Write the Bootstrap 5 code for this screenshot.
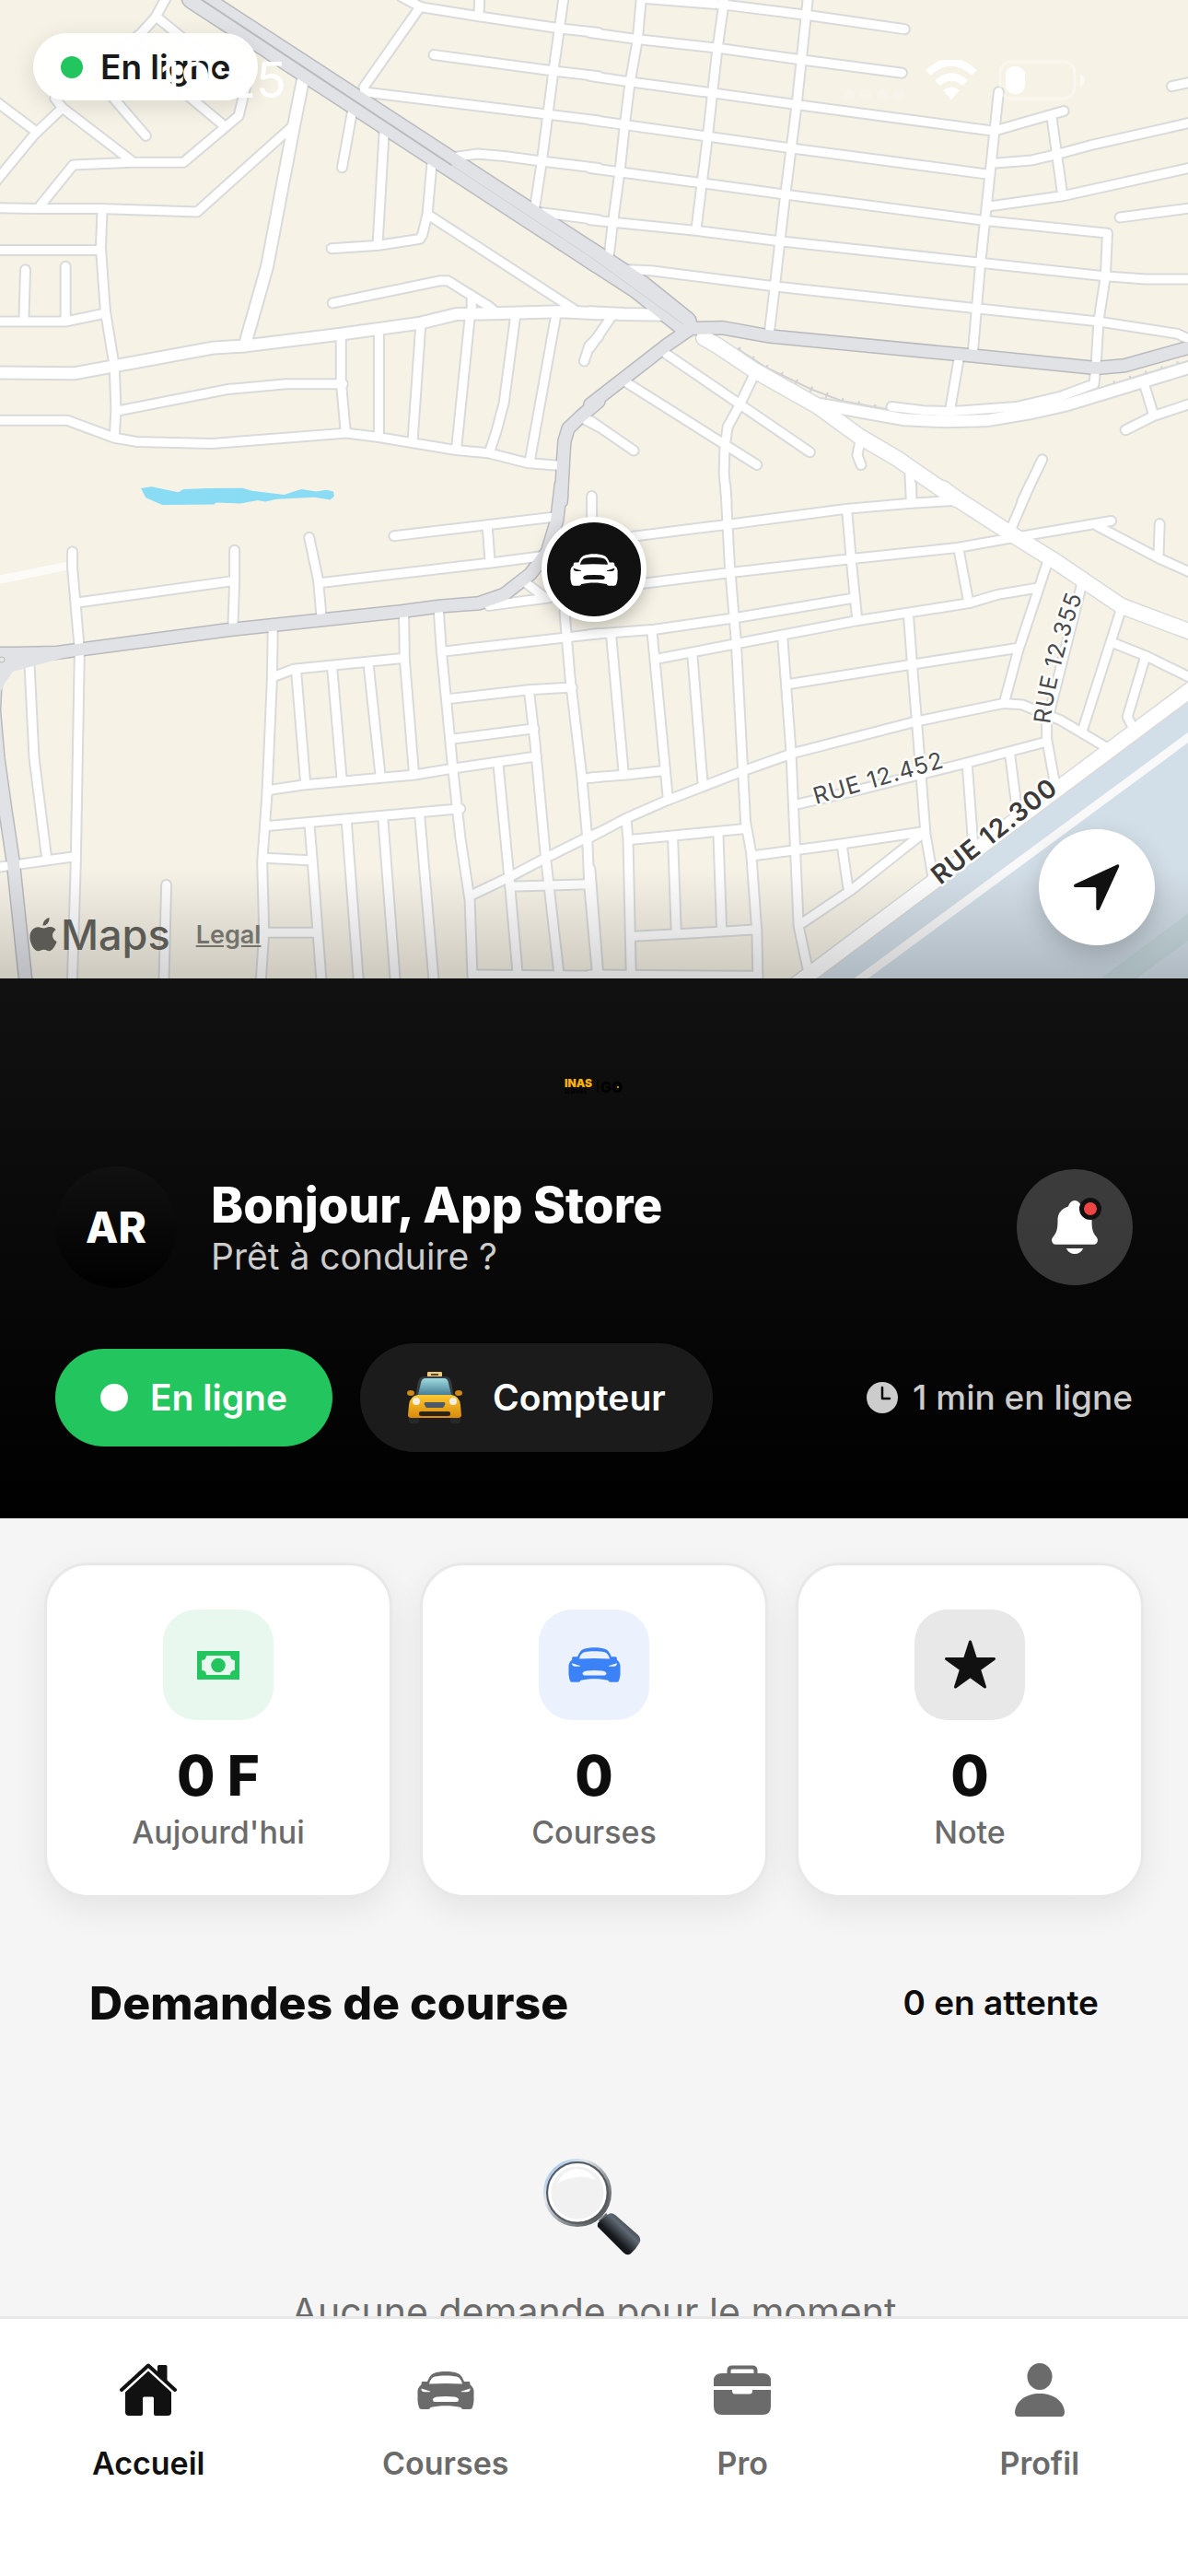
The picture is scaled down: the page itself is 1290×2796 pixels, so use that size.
<!DOCTYPE html>
<html lang="fr">
<head>
<meta charset="utf-8">
<meta name="viewport" content="width=device-width, initial-scale=1">
<title>INAS Go – Accueil</title>
<link href="https://cdn.jsdelivr.net/npm/bootstrap@5.3.0/dist/css/bootstrap.min.css" rel="stylesheet">
<style>
  body { font-family: Inter, "Liberation Sans", sans-serif; background: #f5f5f5; color: #0d0d0d; }
  button, a { font-family: inherit; }
  svg { display: block; flex: none; }

  /* Map */
  .map-area { background: #f6f2e6; }
  .map-canvas { width: 100%; height: auto; }
  .map-canvas path { fill: none; vector-effect: non-scaling-stroke; stroke-linecap: round; stroke-linejoin: round; }
  .map-canvas .shape { stroke: none; }
  .casing { stroke: #d9dbda; stroke-width: 13px; }
  .casing-lg { stroke: #d9dbda; stroke-width: 16px; }
  .casing-xl { stroke: #d9dbda; stroke-width: 19px; }
  .street { stroke: #fff; stroke-width: 9px; }
  .street-lg { stroke: #fff; stroke-width: 12px; }
  .street-xl { stroke: #fff; stroke-width: 16px; }
  .main-edge { stroke: #b9babe; stroke-width: 16px; }
  .main-road { stroke: #e1e2e6; stroke-width: 13px; }
  .way-edge { stroke: #b9babe; stroke-width: 29px; }
  .way-road { stroke: #e1e2e6; stroke-width: 26px; }
  .map-label { font-size: 25px; fill: #4a4a4a; stroke: #fff; stroke-width: 5px; paint-order: stroke; stroke-linejoin: round; letter-spacing: 1px; }
  .map-label-strong { font-size: 28px; font-weight: 600; fill: #3c3a38; }
  .map-fade { height: 120px; background: linear-gradient(rgba(0,0,0,0), rgba(0,0,0,.17)); }
  .map-pill { padding: 14px 30px; gap: 19px; background: rgba(255,255,255,.95); font-size: 37px; line-height: 45px; font-weight: 600; color: #1a1a1a; box-shadow: 0 6px 24px rgba(0,0,0,.12); margin: 36px; }
  .dot-live { width: 24px; height: 24px; background: #22c55e; }
  .status-bar { padding: 55px 112px 0 174px; color: #fff; }
  .clock-text { font-size: 54px; line-height: 64px; }
  .car-pin { width: 114px; height: 114px; background: #111; border: 6px solid #fff; left: 50%; top: 58.200%; box-shadow: 0 6px 18px rgba(0,0,0,.25); }
  .map-credit { padding: 0 32px 20px; color: #5b5a55; gap: 4px; }
  .maps-word { font-size: 45px; line-height: 54px; font-weight: 500; }
  .legal-link { font-size: 27px; line-height: 40px; font-weight: 600; color: #73726c; margin-left: 24px; }
  .locate-btn { width: 126px; height: 126px; background: #fff; margin: 36px; box-shadow: 0 9px 27px rgba(0,0,0,.18); }

  /* Driver header */
  .driver-head { background: linear-gradient(#111, #000); padding: 106px 60px 72px; }
  .brand-row { margin-bottom: 76px; }
  .avatar { width: 132px; height: 132px; background: linear-gradient(#111, #000); font-size: 46px; font-weight: 800; }
  .greet { padding-left: 37px; }
  .hello { font-size: 53px; line-height: 60px; font-weight: 800; }
  .hello-sub { font-size: 39px; line-height: 46px; color: #ccc; margin: 3px 0 0; }
  .bell-btn { width: 126px; height: 126px; background: rgba(255,255,255,.2); }
  .bell-dot { width: 24px; height: 24px; background: #ef4444; border: 5px solid #111; top: 30px; right: 33px; }
  .action-row { margin-top: 60px; gap: 30px; }
  .pill-btn { font-size: 39px; line-height: 46px; font-weight: 600; color: #fff; border: 0; }
  .pill-online { background: #22c55e; padding: 30px 49px; gap: 24px; }
  .pill-meter { background: #1b1b1b; padding: 36px 51px; gap: 33px; }
  .dot-white { width: 30px; height: 30px; background: #fff; }
  .online-time { font-size: 37px; line-height: 44px; font-weight: 500; color: #ccc; gap: 16px; }

  /* Stats */
  .stats { padding: 48px; gap: 30px; }
  .stat-card { border: 3px solid #e8e8e8; border-radius: 48px; padding: 48px 24px; box-shadow: 0 12px 36px rgba(0,0,0,.07); }
  .stat-icon { width: 120px; height: 120px; border-radius: 36px; }
  .tint-green { background: #e8f8ee; color: #22c55e; }
  .tint-blue { background: #ebf2fe; color: #3b82f6; }
  .tint-grey { background: #e8e8e8; color: #111; }
  .stat-value { font-size: 60px; line-height: 72px; font-weight: 800; margin-top: 24px; }
  .stat-label { font-size: 34px; line-height: 40px; font-weight: 500; color: #6b6b6b; margin-top: 6px; }

  /* Requests */
  .requests-head { padding: 36px 97px 0; }
  .requests-title { font-size: 50px; line-height: 60px; font-weight: 800; }
  .requests-count { font-size: 37px; line-height: 44px; font-weight: 600; }
  .empty-state { padding-top: 138px; gap: 36px; font-size: 41px; line-height: 50px; color: #6b6b6b; }

  /* Tab bar */
  .tab-bar { background: #fff; border-top: 3px solid #e7e7e7; padding: 46px 0 102px; }
  .tab-link { color: #6b6b6b; gap: 29px; font-size: 34px; line-height: 40px; font-weight: 600; }
  .tab-link.active { color: #111; }
  .tab-icon { height: 62px; }
</style>
<script src="https://cdn.jsdelivr.net/npm/bootstrap@5.3.0/dist/js/bootstrap.bundle.min.js"></script>
</head>
<body>
<svg width="0" height="0" class="position-absolute" aria-hidden="true">
  <symbol id="car" viewBox="0 0 62 41">
    <path fill="currentColor" fill-rule="evenodd" d="M11 11C13 6 15 3 18 2C25-.6 37-.6 44 2C47 3 49 6 51 11H56Q57.500 11 57.500 13V14.500Q61 17 61.500 21V32Q61 36 60 39Q59.500 41 57 41H50Q48 41 47.500 39C38 36.500 24 36.500 14.500 39Q14 41 12 41H5Q2.500 41 2 39Q1 36 .5 32V21Q1 17 4.500 14.500V13Q4.500 11 6 11ZM13 13.500Q31 12.500 49 13.500C48 9 46 6.500 43 5.500C36 4 26 4 19 5.500C16 6.500 14 9 13 13.500ZM4.500 18.500L14 21.500Q15 22 13.500 22.300H7.500Q5 22 4.500 20ZM57.500 18.500L48 21.500Q47 22 48.500 22.300H54.500Q57 22 57.500 20ZM17 30Q18 28 22 27.500Q31 26.500 40 27.500Q44 28 45 30Q45.500 32.500 43 33H19Q16.500 32.500 17 30Z"/>
  </symbol>
</svg>

<div class="vh-100 d-flex flex-column overflow-hidden">
  <main class="flex-grow-1 overflow-hidden">

    <section class="map-area position-relative" aria-label="Carte">
      <svg class="map-canvas" viewBox="0 0 1290 1062" role="img" aria-label="Plan du quartier">
        <defs>
          <g id="streets">
            <!-- north-west -->
            <g transform="scale(.4114 .3444)">
              <path d="M440-10 410 55 372 105 345 132 255 215 300 310 385 428M415 55 560 195 655 240 630 365 484 512 350 512 193 520 105 650M345 150 590 395M145 310 165 340 345 505M165 340 90 425-10 570M-10 320 90 410M-10 655 95 658 265 658 520 668 770 400"/>
              <path d="M270 660 266 780 278 980 302 1155 306 1290 302 1380M-10 788 262 788M67 850 63 1005M173 840 173 1010M-10 1013 175 1013 275 988M-10 1325 178 1325 302 1380 360 1392 560 1398 915 1365 1000 1378 1200 1418 1290 1428 1395 1460 1475 1467M306 1296 600 1227 755 1210 905 1210"/>
              <path d="M900 1060 900 1200 912 1360M1000 1040 1000 1375M1110 1030 1089 1390M1240 1000 1205 1410M1361 990 1330 1270 1310 1360 1292 1425M1468 990 1398 1455M878 955 1160 885 1182 885 1290 965 1310 985M1245 940 1245 990M875 783 1000 773 1108 753 1115 740 1128 675 1140 515M1014 415 997 765M1128 675 1515 975M930 350 903 528"/>
              <path d="M1110 20 960 275M960 290 1580 380M1060-10 1110 22 1265 52 1480 90 1580 103M1266-10 1264 45M1145 173 1470 225 1580 240M1488-10 1460 230 1430 510 1412 650M1200 495 1260 485 1330 492 1430 508 1580 530M1430 670 1580 693M1580 1060 1555 1090 1542 1138M1540 1320 1580 1345"/>
            </g>
            <!-- north-east -->
            <g transform="translate(645 0) scale(.4114 .3444)">
              <path d="M125-10 115 125 95 260 82 385 68 540 50 700 40 800M130-5 345 15 565 48 820 92M-10 103 110 123 330 152 545 188 813 230M-10 240 95 258 313 293 535 330 1055 413 1240 350M-10 378 300 430 520 467 1045 550M-10 530 285 577 505 613 1030 695 1355 735 1350 870 1332 1010 1325 1150 1320 1210 1230 1250 1115 1282 940 1297 870 1294 785 1282"/>
              <path d="M-10 693 270 727 490 760 1020 828 1345 870 1455 880 1580 880M90 850 150 853 480 903 1010 972 1330 1013 1540 1052 1580 1075M345-10 325 160 300 430 270 720M565-10 535 330 505 613 477 905 463 1045M1068 290 1045 550 1020 830 1010 970 1000 1110M1050 515 1155 505 1220 487 1310 458 1580 385M1045 650 1240 617 1580 527M1208 370 1236 610M1388 685 1580 655M1525 272 1580 258"/>
              <path d="M963 1130 940 1290M190 1115 570 1425M85 1205 430 1465M425 1175 385 1275 353 1345 345 1410 343 1490 350 1580M703 1385 695 1435 705 1465M833 1480 837 1580M1183 1448 1130 1580M1452 1210 1475 1300M1403 1355 1475 1312 1580 1270M-10 1095 45 1000M-10 1325 105 1420"/>
            </g>
            <!-- south-west -->
            <g transform="translate(0 530) scale(.4114 .3444)">
              <path d="M191 200 191 250 210 510 200 1180 190 1580M205 360 615 292M619 195 619 290 615 425M816 155 840 290 848 400M845 298 1295 235 1425 215M1040 150 1465 90M1286 115 1293 225M78 560 90 850 122 1155M-10 1195 200 1160M439 1250 432 1580M720 450 718 600 705 960 692 1180 697 1400 687 1580M720 595 775 570 1068 535M1066 400 1068 540 1092 890"/>
              <path d="M1158 390 1165 510 1195 880 1215 1100 1240 1300 1247 1540M782 580 806 925M877 570 902 915M973 560 1004 905M705 952 800 935 1095 903 1195 883 1415 845M700 1065 1215 1010M700 1165 825 1173M817 1065 825 1180 850 1580M915 1055 948 1580M1011 1045 1045 1580M1108 1035 1147 1580M705 1400 835 1400"/>
              <path d="M1165 515 1495 470 1580 458M1190 663 1395 635 1510 627M1195 790 1410 757M1397 645 1412 800 1440 1160 1480 1580M1490 390 1505 600 1535 900 1550 1100 1555 1250 1580 1580M1240 1285 1345 1225 1440 1165 1550 1100 1590 1080M1345 1255 1555 1248M1315 870 1345 1240 1370 1580M1250 1533 1580 1537M1540 915 1580 910M1390 300 1440 345M1290 370 1450 345M1562 25 1562 100"/>
            </g>
            <!-- south-east -->
            <g transform="translate(645 530) scale(.4114 .3444)">
              <path d="M347-10 358 240 375 480 400 1050 415 1150 430 1400 433 1580M100 152 360 113 665 65 830 48 960 38M838-10 838 45M130 300 365 265 680 222 960 187 1110 155 1365 103M668 75 680 240 694 405M963 195 988 355M-10 460 160 445 375 408 680 347M170 537 375 490 690 418 990 362 1065 335 1175 313M1195 240 1120 510 1085 665M830 400 840 560 855 780 875 1090 895 1230"/>
              <path d="M498 475 520 830 540 1380 565 1520M515 617 840 555 1120 503M-10 1100 85 1040 190 985 395 890 525 835 850 735 1080 678 1130 682 1230 730 1350 815M45 460 78 895M153 450 195 975M260 530 287 930M-10 912 85 903 185 890M85 1040 90 1110 98 1540M100 1107 400 1073M208 1100 217 1400M328 1090 337 1395M105 1412 340 1397 430 1390M-10 1200 12 1540M-10 1533 430 1537"/>
              <path d="M425 1157 640 1123 865 1083M655 1130 670 1255M550 1370 680 1265 860 1095M540 995 700 950 985 865 1190 800M1195 740 1195 790 1215 920M985 870 1000 1110M1098 840 1115 1000M1288 300 1195 740M1393 375 1290 760M1365 485 1460 530 1580 600M1453 540 1408 720 1425 760M1150-10 1100 130M1330 120 1490 220 1580 268M1493 112 1490 220"/>
            </g>
          </g>
          <g id="avenues">
            <path transform="scale(.4114 .3444)" d="M800 250 775 400 705 840 648 1080M-10 1174 195 1177 565 1096 648 1090 900 1053 1110 1018 1205 990 1300 988 1480 982 1580 988"/>
            <path transform="translate(645 0) scale(.4114 .3444)" d="M-10 985 80 990 200 992M600 1275 820 1322 930 1328 1035 1325 1150 1302 1250 1275 1580 1155"/>
          </g>
          <g id="boulevards">
            <path transform="translate(645 0) scale(.4114 .3444)" d="M290 1065 320 1085 420 1165 590 1280 700 1375 800 1445 830 1470 955 1573"/>
            <path transform="translate(645 530) scale(.4114 .3444)" d="M920 0 960 35 1110 150 1220 232 1390 370 1580 455M1590 621 552 1547 530 1567"/>
          </g>
          <g id="mains">
            <path transform="scale(.4114 .3444)" d="M1580 1265 1535 1310 1500 1350 1490 1390 1487 1440 1481 1580"/>
            <path transform="translate(645 0) scale(.4114 .3444)" d="M250 1035 340 1033 465 1060 1000 1121 1325 1160 1400 1152 1580 1092M250 1040 195 1085-10 1275"/>
            <path transform="translate(0 530) scale(.4114 .3444)" d="M-10 521 40 521 150 518 200 510 610 445 1060 388 1160 372 1265 362 1330 335 1400 270 1445 200 1470 100 1481-10M-10 560-16 700-5 850 15 1020 35 1180 70 1580"/>
          </g>
          <g id="highway">
            <path transform="scale(.4114 .3444)" d="M512-10 1580 821"/>
            <path transform="translate(645 0) scale(.4114 .3444)" d="M-10 804 120 905 238 1018"/>
          </g>
          <path id="lbl-355" d="M1140 786Q1148 720 1178 640"/>
          <path id="lbl-452" d="M886 873 1070 820"/>
          <path id="lbl-300" d="M1021 961 1200 819"/>
        </defs>

        <!-- water -->
        <g transform="translate(645 530) scale(.4114 .3444)">
          <path class="shape" style="fill:#d3dfe8" d="M1580 640 560 1560 1580 1560Z"/>
          <path class="shape" style="fill:#c8dade" d="M1580 1330 1320 1560 1415 1560 1580 1415Z"/>
          <path d="M1590 766 690 1558" stroke="#f9f9f9" stroke-width="9"/>
        </g>
        <g transform="translate(0 530) scale(.4114 .3444)">
          <path class="shape" style="fill:#8adbf4" d="M372 0 400-5 470 12 485 3 550 0 640-1 665 8 750 20 795 3 835 10 862 5 880 10 882 25 872 36 830 28 730 34 700 42 680 38 635 48 570 45 565 51 428 52 385 30Z"/>
          <path d="M-10 290 175 245" stroke="#fcfbf8" stroke-width="9"/>
        </g>
        <!-- railway -->
        <g transform="translate(645 0) scale(.4114 .3444)" stroke="#cfd0cf" fill="none">
          <path d="M380 1100 450 1155 570 1225 650 1262 750 1285 830 1300M1330 1225 1450 1180 1568 1138" stroke-width="2"/>
          <path d="M380 1100 450 1155 570 1225 650 1262 750 1285M1330 1225 1450 1180 1568 1138" stroke-width="6" stroke-dasharray="2 16" style="stroke-linecap:butt"/>
        </g>

        <use href="#streets" class="casing"/>
        <use href="#avenues" class="casing-lg"/>
        <use href="#boulevards" class="casing-xl"/>
        <use href="#mains" class="main-edge"/>
        <use href="#highway" class="way-edge"/>
        <use href="#streets" class="street"/>
        <use href="#avenues" class="street-lg"/>
        <use href="#boulevards" class="street-xl"/>
        <use href="#mains" class="main-road"/>
        <use href="#highway" class="way-road"/>
        <path class="shape" style="fill:#e1e2e6" d="M0 704 15 704 80 702 80 711 32 724 14 729 5 742 0 752Z"/>
        <circle cx="2" cy="716" r="3" fill="#e9e9e4" stroke="#b9babe"/>
        <path d="M212-5 490 179" stroke="#b9babe" stroke-width="2"/>
        <path d="M490 179 640 278 742 352" stroke="#cfd0d4" stroke-width="1"/>

        <text class="map-label"><textPath href="#lbl-355">RUE 12.355</textPath></text>
        <text class="map-label"><textPath href="#lbl-452">RUE 12.452</textPath></text>
        <text class="map-label map-label-strong"><textPath href="#lbl-300">RUE 12.300</textPath></text>
      </svg>

      <div class="map-fade position-absolute bottom-0 start-0 w-100"></div>

      <div class="car-pin rounded-circle position-absolute translate-middle d-flex align-items-center justify-content-center text-white">
        <svg width="52" height="35"><use href="#car"/></svg>
      </div>

      <div class="map-pill position-absolute top-0 start-0 rounded-pill d-flex align-items-center">
        <span class="dot-live rounded-circle"></span><span>En ligne</span>
      </div>

      <div class="status-bar position-absolute top-0 start-0 w-100 d-flex align-items-center justify-content-between">
        <span class="clock-text">19:25</span>
        <svg width="262" height="44" viewBox="0 0 262 44" fill="#fff" aria-hidden="true">
          <g opacity=".22"><rect x="0" y="32" width="12" height="12" rx="5"/><rect x="18" y="32" width="12" height="12" rx="5"/><rect x="36" y="32" width="12" height="12" rx="5"/><rect x="54" y="32" width="12" height="12" rx="5"/></g>
          <g fill="none" stroke="#fff" stroke-width="8"><path d="M92 14Q117-9 142 14"/><path d="M102 25Q117 12 132 25"/></g>
          <path d="M108 33Q117 26 126 33L117 43Z"/>
          <rect x="170" y="2" width="81" height="40" rx="12" fill="none" stroke="#fff" stroke-width="3" opacity=".4"/>
          <path d="M257 15Q262 17 262 22Q262 27 257 29Z" opacity=".5"/>
          <rect x="176" y="7" width="21" height="30" rx="9"/>
        </svg>
      </div>

      <div class="map-credit position-absolute bottom-0 start-0 d-flex align-items-center">
        <svg width="30" height="38" viewBox="0 0 30 38" fill="#5b5a55" aria-hidden="true"><path d="M21.500 0Q22 4 19.500 6.500Q17.500 8.800 14.500 8.800Q14.200 5.500 16.500 3Q18.500 .7 21.500 0ZM15.500 11.500C17.500 11.500 19 10 22.500 10C25 10 27.200 11.200 28.600 13.200C23.300 16.300 24.200 23.800 29.600 26C28.400 29.500 25.300 36 21.800 36.200C19.300 36.300 18.500 34.800 15.600 34.800C12.700 34.800 11.800 36.200 9.500 36.300C5.500 36.500 .4 28.500 .4 21.300C.4 14 5 10.300 9.200 10.200C12 10.200 14 11.500 15.500 11.500Z"/></svg>
        <span class="maps-word">Maps</span>
        <a href="#" class="legal-link">Legal</a>
      </div>

      <button type="button" class="locate-btn btn rounded-circle p-0 position-absolute bottom-0 end-0 d-flex align-items-center justify-content-center" aria-label="Me localiser">
        <svg width="50" height="50" viewBox="0 0 50 50" fill="#111"><path d="M47 .4Q50 0 49 3L28.200 48.500Q27.500 50 26 50Q24.300 50 24.300 48V26.500Q24.300 25 22.800 25H2Q0 25 0 23.500Q0 22 1.500 21.500Z"/></svg>
      </button>
    </section>

    <header class="driver-head text-white">
      <div class="brand-row d-flex justify-content-center">
        <svg width="66" height="22" viewBox="0 0 66 22" role="img" aria-label="INAS travel GO" font-weight="800">
          <text x="1" y="12" font-size="12" font-weight="900" fill="#f9b208">INAS</text>
          <text x="1" y="19" font-size="9" font-weight="500" fill="#000">travel</text>
          <path d="M37 4V18" stroke="#000" stroke-width="1"/>
          <text x="40" y="18" font-size="16" fill="#000">GO</text>
          <circle cx="59" cy="12" r="1" fill="#f9b208"/>
        </svg>
      </div>

      <div class="d-flex align-items-center">
        <div class="avatar rounded-circle d-flex align-items-center justify-content-center">AR</div>
        <div class="greet flex-grow-1">
          <h1 class="hello m-0">Bonjour, App Store</h1>
          <p class="hello-sub">Prêt à conduire ?</p>
        </div>
        <button type="button" class="bell-btn btn rounded-circle p-0 position-relative d-flex align-items-center justify-content-center" aria-label="Notifications">
          <svg width="50" height="58" viewBox="0 0 50 58" fill="#fff"><path d="M18 6.500Q20 0 25 0Q30 0 32 6.500C39 8.500 43.500 14 43.500 21C43.500 31 44.500 35 48.500 39.500C51.500 43 49.500 47.700 45.500 47.700H4.500C.5 47.700-1.500 43 1.500 39.500C5.500 35 6.500 31 6.500 21C6.500 14 11 8.500 18 6.500ZM15.700 52H34.300Q31 58 25 58Q19 58 15.700 52Z"/></svg>
          <span class="bell-dot rounded-circle position-absolute"></span>
        </button>
      </div>

      <div class="action-row d-flex align-items-center">
        <button type="button" class="pill-btn pill-online btn rounded-pill d-flex align-items-center"><span class="dot-white rounded-circle"></span>En ligne</button>
        <button type="button" class="pill-btn pill-meter btn rounded-pill d-flex align-items-center">
          <svg width="60" height="46" viewBox="0 5 60 46" overflow="visible" aria-hidden="true">
            <defs>
              <linearGradient id="hood" x1="0" y1="0" x2="0" y2="1"><stop offset="0" stop-color="#fbc934"/><stop offset="1" stop-color="#d98a0a"/></linearGradient>
              <linearGradient id="glass" x1="0" y1="0" x2="0" y2="1"><stop offset="0" stop-color="#9fdbe0"/><stop offset="1" stop-color="#467f95"/></linearGradient>
            </defs>
            <rect x="2" y="46" width="11" height="10" rx="3" fill="#26282b"/><rect x="47" y="46" width="11" height="10" rx="3" fill="#26282b"/>
            <rect x="22" y="0" width="16" height="6" rx="1" fill="#eacb80"/><path d="M26 3H34" stroke="#5b4a22" stroke-width="2"/>
            <path d="M9 27 12 11Q13 5 19 5H41Q47 5 48 11L51 27Z" fill="#383b3e"/>
            <path d="M12 25 15 12Q16 7 20 7H40Q44 7 45 12L48 25Z" fill="url(#glass)"/>
            <ellipse cx="4" cy="23" rx="4" ry="3" fill="#d08a12"/><ellipse cx="56" cy="23" rx="4" ry="3" fill="#d08a12"/>
            <path d="M2 36Q3 26 12 25H48Q57 26 58 36L59 47Q59 50 55 50H5Q1 50 1 47Z" fill="url(#hood)"/>
            <circle cx="10" cy="32" r="4" fill="#f4efe0"/><circle cx="50" cy="32" r="4" fill="#f4efe0"/>
            <path d="M20 33H40Q42 33 41 36L39 39H21L19 36Q18 33 20 33Z" fill="#4c5a68"/>
            <rect x="13" y="43" width="34" height="5" rx="2" fill="#2c2413"/>
          </svg>Compteur</button>
        <div class="online-time ms-auto d-flex align-items-center">
          <svg width="34" height="34" viewBox="0 0 34 34" aria-hidden="true"><circle cx="17" cy="17" r="17" fill="#ccc"/><path d="M17 6V18H25" fill="none" stroke="#050505" stroke-width="2.500" stroke-linecap="round" stroke-linejoin="round"/></svg>
          <span>1 min en ligne</span>
        </div>
      </div>
    </header>

    <section class="stats d-flex" aria-label="Statistiques">
      <div class="stat-card card flex-fill w-100 align-items-center">
        <div class="stat-icon tint-green d-flex align-items-center justify-content-center">
          <svg width="46" height="31" viewBox="0 0 46 31" fill="currentColor"><path fill-rule="evenodd" d="M0 0H46V31H0ZM10 5Q10 10 5 10V21Q10 21 10 26H36Q36 21 41 21V10Q36 10 36 5Z"/><circle cx="23" cy="15.500" r="7.800"/></svg>
        </div>
        <div class="stat-value">0 F</div>
        <div class="stat-label">Aujourd'hui</div>
      </div>
      <div class="stat-card card flex-fill w-100 align-items-center">
        <div class="stat-icon tint-blue d-flex align-items-center justify-content-center"><svg width="57" height="38"><use href="#car"/></svg></div>
        <div class="stat-value">0</div>
        <div class="stat-label">Courses</div>
      </div>
      <div class="stat-card card flex-fill w-100 align-items-center">
        <div class="stat-icon tint-grey d-flex align-items-center justify-content-center">
          <svg width="57" height="54" viewBox="0 0 57 54" fill="currentColor" stroke="currentColor" stroke-width="3" stroke-linejoin="round"><path d="M28.500 2 34.500 20.500H54.500L38.500 32 44.500 51 28.500 39.500 12.500 51 18.500 32 2.500 20.500H22.500Z"/></svg>
        </div>
        <div class="stat-value">0</div>
        <div class="stat-label">Note</div>
      </div>
    </section>

    <section>
      <div class="requests-head d-flex align-items-center justify-content-between">
        <h2 class="requests-title m-0">Demandes de course</h2>
        <span class="requests-count">0 en attente</span>
      </div>
      <div class="empty-state d-flex flex-column align-items-center">
        <svg width="110" height="106" viewBox="2 0 110 106" aria-hidden="true">
          <defs>
            <linearGradient id="rim" x1="0" y1="0" x2="1" y2="1"><stop offset="0" stop-color="#8fb9ea"/><stop offset=".3" stop-color="#dfe6ee"/><stop offset=".65" stop-color="#8a8f93"/><stop offset="1" stop-color="#3d4043"/></linearGradient>
            <linearGradient id="grip" x1="0" y1="1" x2="1" y2="0"><stop offset="0" stop-color="#050608"/><stop offset=".4" stop-color="#15181c"/><stop offset=".62" stop-color="#5f6973"/><stop offset="1" stop-color="#0b0d10"/></linearGradient>
          </defs>
          <path d="M62 68 70 60 76 66 66 76Z" fill="#6c7073"/>
          <circle cx="39" cy="38" r="34" fill="#f1f1f1" stroke="url(#rim)" stroke-width="6"/>
          <circle cx="39" cy="38" r="33" fill="none" stroke="#55595c" stroke-width="2"/>
          <circle cx="39" cy="38" r="30" fill="none" stroke="#fff" stroke-width="3"/>
          <path d="M17 28Q23 13 39 12Q53 13 59 24Q39 16 17 28Z" fill="#fff"/>
          <path d="M61 75Q60 71 64 68L73 61Q76 59 80 62L105 84Q109 88 106 93Q102 100 97 104Q93 107 89 103Z" fill="url(#grip)"/>
        </svg>
        <span>Aucune demande pour le moment</span>
      </div>
    </section>
  </main>

  <nav class="tab-bar flex-shrink-0 d-flex" aria-label="Navigation principale">
    <a href="#" class="tab-link active flex-fill w-100 d-flex flex-column align-items-center text-decoration-none" aria-current="page">
      <span class="tab-icon d-flex align-items-center"><svg width="62" height="58" viewBox="0 0 62 58" fill="currentColor"><path d="M2 29 31 2.500 60 29" fill="none" stroke="currentColor" stroke-width="4" stroke-linecap="round" stroke-linejoin="round"/><path d="M41 10V3.500Q41 2 42.500 2H50Q51.500 2 51.500 3.500V21ZM31 8.500 56 31.500V53Q56 57 52 57H39Q37 57 37 55V38Q37 36.500 35.500 36.500H26.500Q25 36.500 25 38V55Q25 57 23 57H10Q6 57 6 53V31.500Z"/></svg></span>
      <span>Accueil</span>
    </a>
    <a href="#" class="tab-link flex-fill w-100 d-flex flex-column align-items-center text-decoration-none">
      <span class="tab-icon d-flex align-items-center"><svg width="62" height="41"><use href="#car"/></svg></span>
      <span>Courses</span>
    </a>
    <a href="#" class="tab-link flex-fill w-100 d-flex flex-column align-items-center text-decoration-none">
      <span class="tab-icon d-flex align-items-center"><svg width="62" height="54" viewBox="0 0 62 54" fill="currentColor"><path d="M16.500 10V6Q16.500 2.500 20 2.500H42Q45.500 2.500 45.500 6V10" fill="none" stroke="currentColor" stroke-width="4"/><path d="M0 23V17Q0 9 9 9H53Q62 9 62 17V23ZM0 27H20V29Q20.500 31.500 23 31.500H39Q41.500 31.500 42 29V27H62V45Q62 54 53 54H9Q0 54 0 45Z"/></svg></span>
      <span>Pro</span>
    </a>
    <a href="#" class="tab-link flex-fill w-100 d-flex flex-column align-items-center text-decoration-none">
      <span class="tab-icon d-flex align-items-center"><svg width="54" height="58" viewBox="0 0 54 58" fill="currentColor"><ellipse cx="27" cy="14.500" rx="13.500" ry="14.500"/><path d="M0 53C1 41 12 33 27 33C42 33 53 41 54 53Q54 58 50 58H4Q0 58 0 53Z"/></svg></span>
      <span>Profil</span>
    </a>
  </nav>
</div>
</body>
</html>
